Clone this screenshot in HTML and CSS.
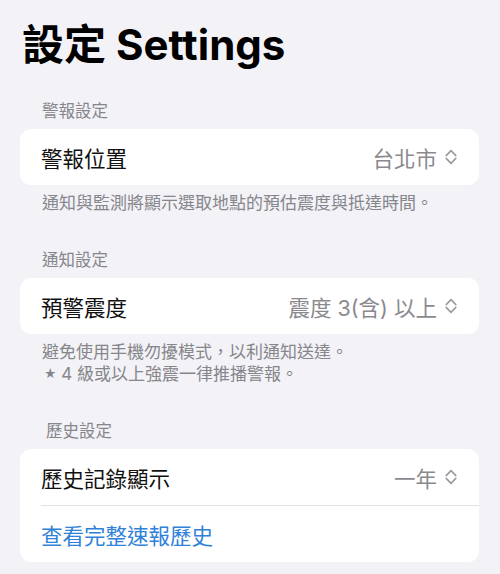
FILE: index.html
```html
<!DOCTYPE html>
<html lang="zh-Hant">
<head>
<meta charset="utf-8">
<title>設定 Settings</title>
<link rel="stylesheet" href="styles.css">
</head>
<body>
<main class="page">
  <h1 class="title">設定 Settings</h1>

  <section class="group">
    <div class="group-header">警報設定</div>
    <div class="card">
      <div class="row">
        <span class="row-label">警報位置</span>
        <span class="row-value">台北市
          <svg class="updown" viewBox="0 0 12 18" width="12" height="18" aria-hidden="true"><path d="M1.2 7.6 L6 2.6 L10.8 7.6 M1.2 10.4 L6 15.4 L10.8 10.4" fill="none" stroke="currentColor" stroke-width="1.6" stroke-linecap="round" stroke-linejoin="round"/></svg>
        </span>
      </div>
    </div>
    <div class="group-footer">通知與監測將顯示選取地點的預估震度與抵達時間。</div>
  </section>

  <section class="group">
    <div class="group-header">通知設定</div>
    <div class="card">
      <div class="row">
        <span class="row-label">預警震度</span>
        <span class="row-value">震度 3(含) 以上
          <svg class="updown" viewBox="0 0 12 18" width="12" height="18" aria-hidden="true"><path d="M1.2 7.6 L6 2.6 L10.8 7.6 M1.2 10.4 L6 15.4 L10.8 10.4" fill="none" stroke="currentColor" stroke-width="1.6" stroke-linecap="round" stroke-linejoin="round"/></svg>
        </span>
      </div>
    </div>
    <div class="group-footer">避免使用手機勿擾模式，以利通知送達。<br><span class="star">★</span> 4 級或以上強震一律推播警報。</div>
  </section>

  <section class="group">
    <div class="group-header group-header--inset">歷史設定</div>
    <div class="card">
      <div class="row">
        <span class="row-label">歷史記錄顯示</span>
        <span class="row-value">一年
          <svg class="updown" viewBox="0 0 12 18" width="12" height="18" aria-hidden="true"><path d="M1.2 7.6 L6 2.6 L10.8 7.6 M1.2 10.4 L6 15.4 L10.8 10.4" fill="none" stroke="currentColor" stroke-width="1.6" stroke-linecap="round" stroke-linejoin="round"/></svg>
        </span>
      </div>
      <div class="separator"></div>
      <div class="row">
        <span class="row-link">查看完整速報歷史</span>
      </div>
    </div>
  </section>
</main>
</body>
</html>
```

FILE: styles.css
```css
html, body {
  margin: 0;
  padding: 0;
  background: #f2f2f7;
}

body {
  font-family: "Inter", "Noto Sans CJK TC", "Noto Sans CJK SC", sans-serif;
  color: #000;
}

.page {
  padding: 21px 21px 0 20px;
}

.title {
  margin: 0;
  padding-left: 2px;
  font-size: 42px;
  line-height: 48px;
  font-weight: 700;
  letter-spacing: 0;
}

.group {
  margin-top: 32px;
}

.group + .group {
  margin-top: 36px;
}

.group-header {
  padding-left: 22px;
  font-size: 16.5px;
  line-height: 20px;
  color: #86868b;
  margin-bottom: 8px;
}

.group-header--inset {
  padding-left: 26px;
}

.card {
  background: #fff;
  border-radius: 11px;
  overflow: hidden;
}

.row {
  height: 56px;
  display: flex;
  align-items: center;
  justify-content: space-between;
  padding: 0 22px 0 21px;
}

.row-label {
  font-size: 21.5px;
  color: #111;
}

.row-value {
  display: flex;
  align-items: center;
  gap: 8px;
  font-size: 21.5px;
  color: #8a8a8e;
}

.updown {
  color: #9a9a9f;
  display: block;
}

.row-link {
  font-size: 21.5px;
  color: #2f82d8;
}

.separator {
  height: 1px;
  background: #e1e1e5;
  margin-left: 21px;
}

.group-footer {
  margin-top: 8px;
  padding-left: 22px;
  font-size: 17px;
  line-height: 21px;
  color: #86868b;
}

.star {
  display: inline-block;
  font-size: 12px;
  vertical-align: 2px;
  padding-left: 2px;
}
```
